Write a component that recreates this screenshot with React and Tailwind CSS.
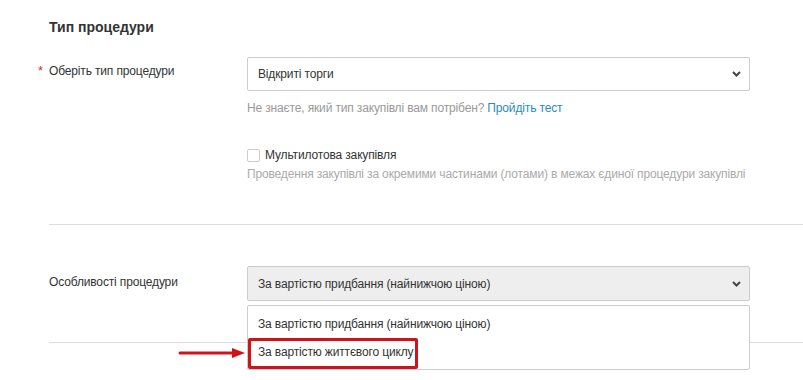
import React from "react";

function Chevron() {
  return (
    <svg width="9" height="6" viewBox="0 0 9 6" className="shrink-0">
      <polyline points="1,1 4.5,4.5 8,1" fill="none" stroke="#444" strokeWidth="2" />
    </svg>
  );
}

export default function App() {
  return (
    <div
      className="relative w-[803px] h-[380px] overflow-hidden bg-white pl-[49px] text-[#333] text-[12px] tracking-[-0.15px]"
      style={{ fontFamily: '"Liberation Sans", Arial, sans-serif' }}
    >
      <div className="pt-[17px] text-[14px] leading-[20px] font-bold text-[#333] tracking-normal">Тип процедури</div>

      <div className="mt-[20px] flex">
        <div className="w-[198px] pt-[5px] leading-[18px] flex">
          <span className="-ml-[11px] w-[11px] text-[#d9302c] text-[13px]">*</span>
          <span>Оберіть тип процедури</span>
        </div>
        <div className="w-[503px]">
          <div className="h-[34px] border border-[#ccc] rounded-[2px] pl-[10px] pr-[8px] flex items-center justify-between leading-[18px]">
            <span>Відкриті торги</span>
            <Chevron />
          </div>
          <div className="mt-[8px] leading-[18px] text-[#999]">
            Не знаєте, який тип закупівлі вам потрібен?{" "}
            <span className="text-[#2a8bbf]">Пройдіть тест</span>
          </div>
          <div className="mt-[29px] flex items-center leading-[18px]">
            <span className="w-[13px] h-[13px] border border-[#ccc] rounded-[2px] bg-white mr-[5px]" />
            <span>Мультилотова закупівля</span>
          </div>
          <div className="mt-[1px] leading-[18px] text-[#aaa] whitespace-nowrap">
            Проведення закупівлі за окремими частинами (лотами) в межах єдиної процедури закупівлі
          </div>
        </div>
      </div>

      <div className="mt-[41px] border-t border-[#ddd]" />

      <div className="mt-[41px] flex">
        <div className="w-[198px] pt-[7px] leading-[18px]">Особливості процедури</div>
        <div className="relative w-[503px]">
          <div className="h-[35px] border border-[#ccc] rounded-[2px] bg-[#eeeeee] pl-[10px] pr-[8px] flex items-center justify-between leading-[18px]">
            <span>За вартістю придбання (найнижчою ціною)</span>
            <Chevron />
          </div>
          <div className="absolute left-0 right-0 top-[39px] z-10 border border-[#ccc] rounded-[2px] bg-white pt-[4px] pb-[3px]">
            <div className="h-[28px] pl-[10px] flex items-center leading-[18px]">За вартістю придбання (найнижчою ціною)</div>
            <div className="h-[28px] pl-[10px] flex items-center leading-[18px]">За вартістю життєвого циклу</div>
          </div>
        </div>
      </div>

      <div className="mt-[41px] border-t border-[#ddd]" />

      <div className="absolute left-[248px] top-[338px] w-[170px] h-[31px] border-[3px] border-[#d0121b] rounded-[2px] z-20" />
      <svg className="absolute left-[178px] top-[346px] z-20" width="70" height="14" viewBox="0 0 70 14">
        <line x1="2" y1="7" x2="56" y2="7" stroke="#d0121b" strokeWidth="3" strokeLinecap="round" />
        <polygon points="54,2 67,7 54,12" fill="#d0121b" />
      </svg>
    </div>
  );
}
